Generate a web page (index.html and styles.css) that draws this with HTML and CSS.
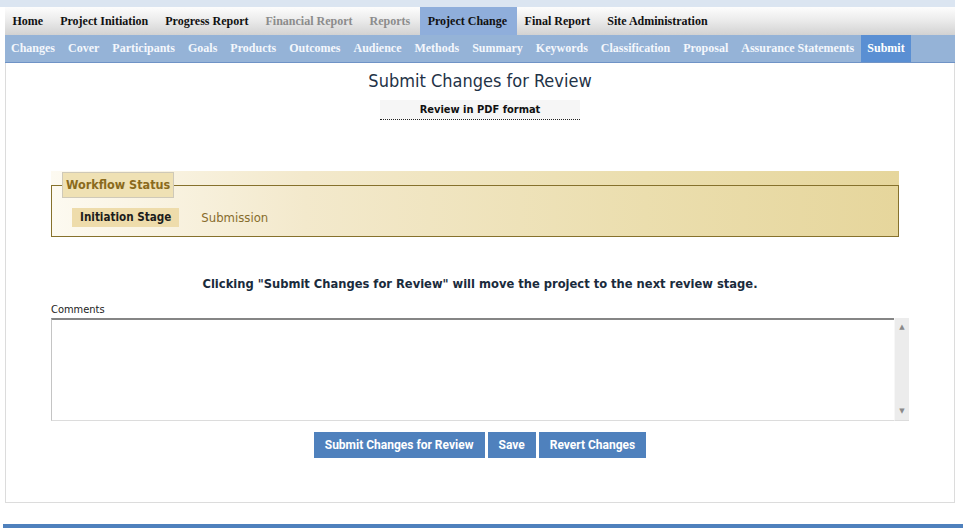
FILE: index.html
```html
<!DOCTYPE html>
<html lang="en">

<head>
    <meta charset="UTF-8">
    <title>Submit Changes for Review</title>
    <link rel="stylesheet" href="styles.css">
</head>

<body>
    <div class="topband"></div>

    <div class="page">
        <ul class="main-tabs">
            <li>Home</li>
            <li>Project Initiation</li>
            <li>Progress Report</li>
            <li class="disabled">Financial Report</li>
            <li class="disabled">Reports</li>
            <li class="active">Project Change</li>
            <li>Final Report</li>
            <li>Site Administration</li>
        </ul>

        <ul class="sub-tabs">
            <li>Changes</li>
            <li>Cover</li>
            <li>Participants</li>
            <li>Goals</li>
            <li>Products</li>
            <li>Outcomes</li>
            <li>Audience</li>
            <li>Methods</li>
            <li>Summary</li>
            <li>Keywords</li>
            <li>Classification</li>
            <li>Proposal</li>
            <li>Assurance Statements</li>
            <li class="active">Submit</li>
        </ul>

        <div class="content">
            <h2 class="title">Submit Changes for Review</h2>
            <div class="pdf-link">Review in PDF format</div>

            <div class="workflow">
                <fieldset>
                    <legend>Workflow Status</legend>
                    <div class="stages">
                        <span class="stage current">Initiation Stage</span>
                        <span class="stage">Submission</span>
                    </div>
                </fieldset>
            </div>

            <p class="notice">Clicking "Submit Changes for Review" will move the project to the next review stage.</p>

            <label class="comments-label" for="comments">Comments</label>
            <div class="comments-box">
                <textarea id="comments" class="comments"></textarea>
                <div class="scrollbar">
                    <span>&#9650;</span>
                    <span>&#9660;</span>
                </div>
            </div>

            <div class="actions">
                <button>Submit Changes for Review</button>
                <button>Save</button>
                <button>Revert Changes</button>
            </div>
        </div>
    </div>

    <div class="footer-bar"></div>
</body>

</html>
```

FILE: styles.css
```css
body {
    margin: 0;
    font-family: "DejaVu Sans", sans-serif;
    background: #fff;
}

.topband {
    width: 955px;
    height: 7px;
    background-color: #dbe5f1;
}

.page {
    width: 950px;
    margin-left: 5px;
}

.main-tabs, .sub-tabs {
    list-style: none;
    margin: 0;
    padding: 0;
    display: flex;
    font-family: "Liberation Serif", serif;
    font-weight: bold;
    font-size: 12px;
}

.main-tabs {
    height: 28px;
    background: linear-gradient(#fdfdfd, #ececec 45%, #d2d2d2);
}

.main-tabs li {
    padding: 0 9.5px 0 7.5px;
    line-height: 28px;
    color: #111;
}

.main-tabs li.disabled {
    color: #8c8c8c;
}

.main-tabs li.active {
    padding: 0 10px 0 8px;
    background-color: #8faedb;
}

.sub-tabs {
    height: 27px;
    background-color: #95b3d7;
    border-bottom: 1px solid #6f93c6;
}

.sub-tabs li {
    padding: 0 6.5px;
    line-height: 27px;
    color: #f4f7fc;
}

.sub-tabs li:first-child {
    padding-left: 6px;
}

.sub-tabs li.active {
    background-color: #5a8fd3;
    color: #fff;
}

.content {
    border: 1px solid #dcdcdc;
    border-top: none;
    padding: 6px 45px 44px 45px;
}

.title {
    margin: 0;
    text-align: center;
    font-family: "DejaVu Sans Condensed", "DejaVu Sans", sans-serif;
    font-weight: normal;
    font-size: 18px;
    line-height: 24px;
    color: #1f3347;
}

.pdf-link {
    width: 200px;
    height: 19px;
    margin: 7px auto 0;
    background-color: #f6f6f6;
    border-bottom: 1px dotted #222;
    text-align: center;
    font-family: "DejaVu Sans Condensed", "DejaVu Sans", sans-serif;
    font-weight: bold;
    font-size: 11px;
    line-height: 19px;
    color: #111;
}

.workflow {
    width: 848px;
    margin-top: 51px;
    padding-top: 1px;
    background: linear-gradient(to right, #fdfaf1, #f3e9cc 30%, #ebdeae 70%, #e6d69c);
}

.workflow fieldset {
    margin: 0;
    padding: 0 10px 9px 20px;
    border: 1px solid #86712c;
}

.workflow legend {
    margin-left: -10px;
    padding: 0 3px;
    line-height: 24px;
    background-color: #efe1b4;
    border: 1px solid #cfc9b8;
    font-family: "DejaVu Sans Condensed", "DejaVu Sans", sans-serif;
    font-weight: bold;
    font-size: 12.5px;
    color: #8a6a1c;
}

.stages {
    display: flex;
    align-items: center;
    gap: 22px;
    margin-top: 10px;
    font-family: "DejaVu Sans Condensed", "DejaVu Sans", sans-serif;
    font-size: 13px;
}

.stage {
    color: #876c2c;
}

.stage.current {
    padding: 0 8px;
    line-height: 19px;
    background-color: #eedcab;
    font-weight: bold;
    font-size: 11.6px;
    color: #1c1c1c;
}

.notice {
    margin: 39px 0 0;
    text-align: center;
    font-family: "DejaVu Sans Condensed", "DejaVu Sans", sans-serif;
    font-weight: bold;
    font-size: 12.8px;
    line-height: 16px;
    color: #1a2b3c;
}

.comments-label {
    display: block;
    margin-top: 11px;
    font-family: "DejaVu Sans Condensed", "DejaVu Sans", sans-serif;
    font-size: 11px;
    line-height: 14px;
    color: #222;
}

.comments-box {
    display: flex;
    width: 858px;
    height: 103px;
    margin-top: 1px;
}

.comments {
    flex: 1;
    margin: 0;
    padding: 2px;
    border: none;
    border-top: 2px solid #858585;
    border-left: 1px solid #c4c4c4;
    border-bottom: 1px solid #dcdcdc;
    resize: none;
    outline: none;
}

.scrollbar {
    width: 14px;
    display: flex;
    flex-direction: column;
    justify-content: space-between;
    align-items: center;
    padding: 6px 0 5px;
    background-color: #ececec;
    border-left: 1px solid #f7f7f7;
    border-bottom: 1px solid #dcdcdc;
    font-size: 7px;
    line-height: 7px;
    color: #8a8a8a;
}

.actions {
    display: flex;
    justify-content: center;
    gap: 3px;
    margin-top: 11px;
}

.actions button {
    height: 26px;
    padding: 0 11px;
    border: none;
    background-color: #4f81bd;
    color: #fff;
    font-family: "Roboto", sans-serif;
    font-weight: bold;
    font-size: 12px;
}

.footer-bar {
    height: 4px;
    margin-top: 21px;
    margin-left: 3px;
    background-color: #4f81bd;
}
```
